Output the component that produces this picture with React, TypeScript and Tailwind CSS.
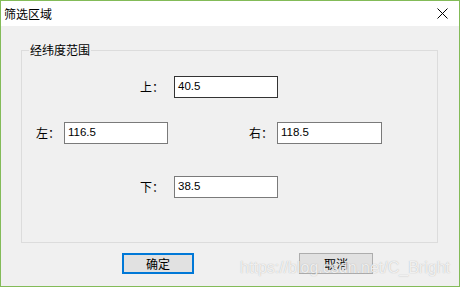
/**
 * 筛选区域 dialog – a Win10 style form with four coordinate inputs
 */

const font = { fontFamily: '"Noto Sans CJK SC", "Liberation Sans", sans-serif' };

function Field({ value, focused = false, width = 'w-[104px]' }: { value: string; focused?: boolean; width?: string }) {
  return (
    <div
      className={`${width} h-[22px] bg-white border ${focused ? 'border-[#333333]' : 'border-[#7a7a7a]'} flex items-center pl-[3px] text-[11.5px] text-black`}
      style={{ fontFamily: '"Liberation Sans", Arial, sans-serif' }}
    >
      {value}
    </div>
  );
}

function Label({ text, width }: { text: string; width: string }) {
  return <span className={`${width} text-[12px] text-black leading-none`}>{text}</span>;
}

export default function App() {
  return (
    <div className="w-[460px] h-[287px] border border-[#83bb58] flex flex-col bg-[#f0f0f0] select-none" style={font}>
      {/* Title bar */}
      <div className="h-[25px] bg-white flex items-center justify-between pl-[3px] pr-[11px]">
        <span className="text-[12px] text-black">筛选区域</span>
        <svg width="11" height="11" viewBox="0 0 11 11" className="text-black">
          <path d="M0.5 0.5l10 10M10.5 0.5l-10 10" stroke="currentColor" strokeWidth="1" />
        </svg>
      </div>

      {/* Body */}
      <div className="flex-1 relative flex flex-col">
        {/* Group box */}
        <div className="relative ml-[20px] mt-[24px] w-[417px] h-[193px] border border-[#dcdcdc] pt-[25px] flex flex-col">
          <span className="absolute left-[7px] -top-[9px] px-[1px] bg-[#f0f0f0] text-[12px] text-black leading-[16px]">
            经纬度范围
          </span>

          <div className="flex items-center pl-[118px]">
            <Label text="上：" width="w-[34px]" />
            <Field value="40.5" focused />
          </div>

          <div className="flex items-center pl-[14px] mt-[24px]">
            <Label text="左：" width="w-[28px]" />
            <Field value="116.5" />
            <div className="w-[81px]" />
            <Label text="右：" width="w-[28px]" />
            <Field value="118.5" width="w-[105px]" />
          </div>

          <div className="flex items-center pl-[118px] mt-[32px]">
            <Label text="下：" width="w-[34px]" />
            <Field value="38.5" />
          </div>
        </div>

        {/* Buttons */}
        <div className="flex pl-[121px] gap-[105px] mt-[10px]">
          <button className="w-[72px] h-[21px] bg-[#e1e1e1] border-2 border-[#0078d7] text-[12px] text-black flex items-center justify-center">
            确定
          </button>
          <button className="w-[74px] h-[21px] bg-[#e1e1e1] border border-[#adadad] text-[12px] text-black flex items-center justify-center">
            取消
          </button>
        </div>

        {/* Watermark */}
        <span
          className="absolute right-[9px] bottom-[10px] text-[16px] leading-none text-white/80 pointer-events-none"
          style={{ fontFamily: '"Liberation Sans", Arial, sans-serif', textShadow: '0 0 1px rgba(120,120,120,0.6)' }}
        >
          https://blog.csdn.net/C_Bright
        </span>
      </div>
    </div>
  );
}
